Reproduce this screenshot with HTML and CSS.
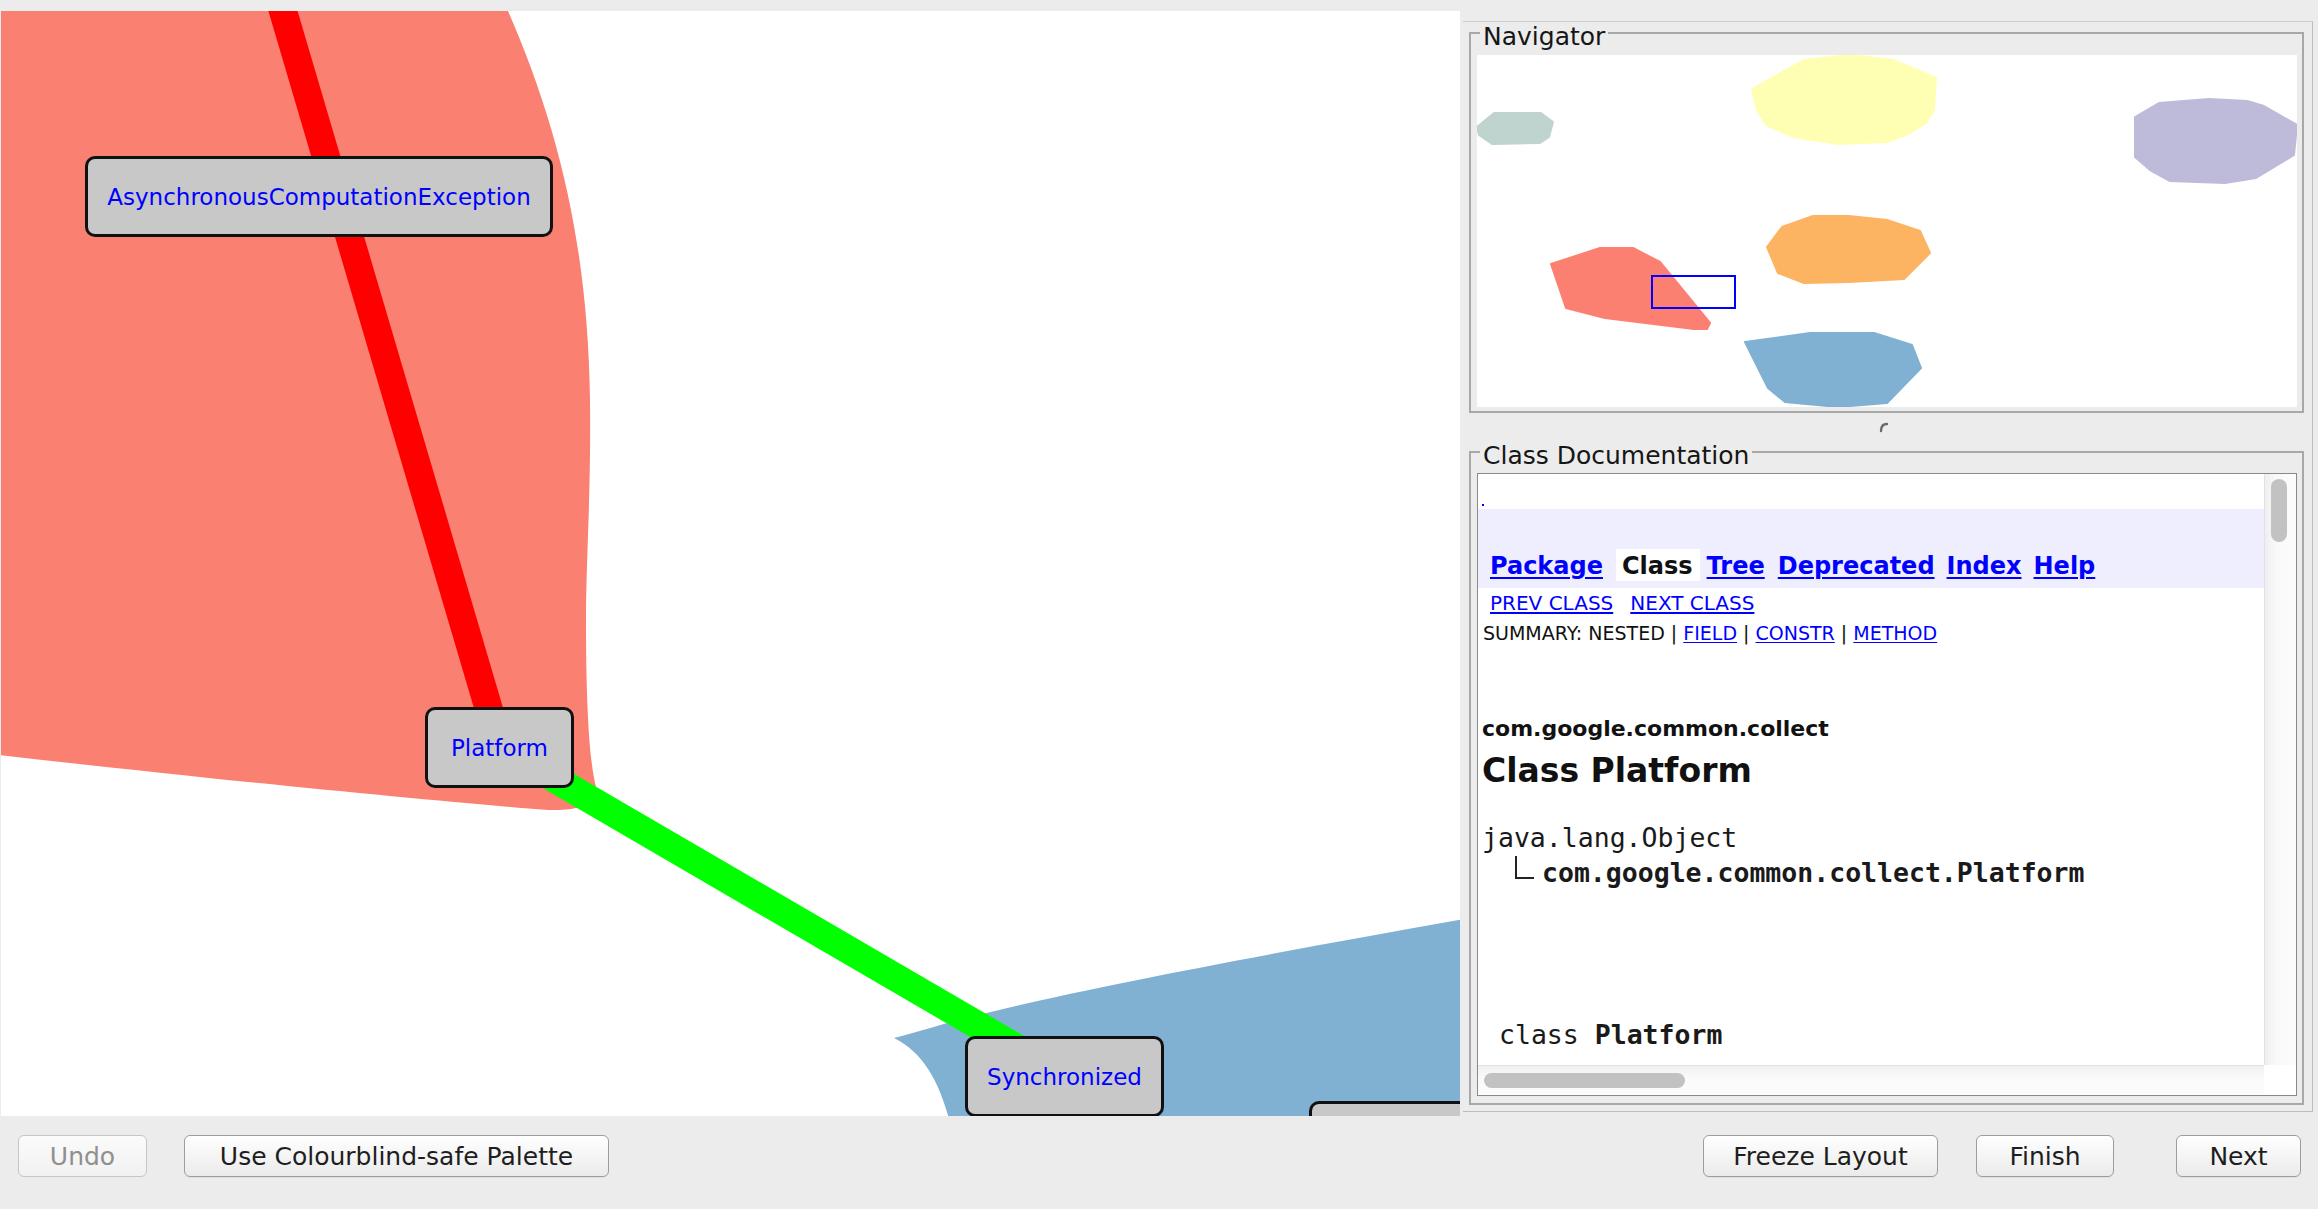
FILE: index.html
```html
<!DOCTYPE html>
<html>
<head>
<meta charset="utf-8">
<title>Graph Explorer</title>
<link rel="stylesheet" href="styles.css">
</head>
<body>
<div class="app">
  <div class="main">
    <div class="canvas">
      <svg class="graph" viewBox="1 11 1459 1105" width="1459" height="1105">
        <path class="hull hull-red" d="M -10 11 L 508 11 C 560 130 588 250 590 400 C 591 500 586 560 586 620 C 586 700 589 760 596 787 C 600 803 580 811 548 810 C 420 800 200 778 -10 754 Z"/>
        <path class="hull hull-blue" d="M 894 1038 C 925 1030 955 1020 991 1012 C 1100 985 1290 950 1470 918 L 1470 1130 L 952 1130 C 942 1090 928 1055 894 1038 Z"/>
        <line class="edge edge-red" x1="265" y1="-50" x2="500" y2="747"/>
        <line class="edge edge-green" x1="500" y1="747" x2="1065" y2="1076"/>
      </svg>
      <div class="node n-async">AsynchronousComputationException</div>
      <div class="node n-platform">Platform</div>
      <div class="node n-sync">Synchronized</div>
      <div class="node n-other"></div>
    </div>
    <div class="side">
      <fieldset class="group nav-group">
        <legend>Navigator</legend>
        <svg class="minimap" viewBox="1477 55 820 352" width="820" height="352">
          <polygon class="mm mm-grey" points="1477,127 1494,113 1541,113 1553,122 1549,137 1540,143 1492,144 1479,135"/>
          <polygon class="mm mm-yellow" points="1752,89 1804,60 1849,55 1893,60 1936,78 1934,110 1926,123 1910,133 1887,142 1838,144 1793,137 1766,125 1757,110"/>
          <polygon class="mm mm-purple" points="2135,117 2159,103 2209,99 2247,101 2264,106 2297,125 2294,155 2256,178 2225,183 2170,181 2150,170 2135,157"/>
          <polygon class="mm mm-orange" points="1782,227 1813,216 1849,216 1887,220 1920,231 1930,253 1904,279 1849,282 1804,283 1778,273 1767,247"/>
          <polygon class="mm mm-red" points="1551,264 1600,248 1633,248 1660,262 1710,323 1707,329 1694,329 1605,318 1566,308"/>
          <polygon class="mm mm-blue" points="1745,342 1810,333 1874,333 1912,345 1921,368 1887,403 1838,407 1785,402 1768,388"/>
          <rect class="mm-view" x="1652" y="276" width="83" height="32"/>
        </svg>
      </fieldset>
      <div class="divider">
        <svg class="grip" viewBox="0 0 12 12" width="12" height="12"><path d="M3 10 C3 6 5 3 9 3"/></svg>
      </div>
      <fieldset class="group doc-group">
        <legend>Class Documentation</legend>
        <div class="pane">
          <div class="viewport">
            <div class="doc-top"><span class="doc-dot"></span></div>
            <div class="navband">
              <a class="nav-link nl-package" href="#">Package</a>
              <span class="nav-current">Class</span>
              <a class="nav-link nl-tree" href="#">Tree</a>
              <a class="nav-link nl-dep" href="#">Deprecated</a>
              <a class="nav-link nl-index" href="#">Index</a>
              <a class="nav-link" href="#">Help</a>
            </div>
            <div class="subnav"><a href="#">PREV CLASS</a><a class="sub-next" href="#">NEXT CLASS</a></div>
            <div class="summary">SUMMARY: NESTED | <a href="#">FIELD</a> | <a href="#">CONSTR</a> | <a href="#">METHOD</a></div>
            <div class="pkg">com.google.common.collect</div>
            <div class="title">Class Platform</div>
            <div class="inherit">java.lang.Object</div>
            <div class="inherit inherit-sub"><span class="tree-elbow"></span><b>com.google.common.collect.Platform</b></div>
            <div class="inherit sig">class <b>Platform</b></div>
          </div>
          <div class="vbar"><div class="vthumb"></div></div>
          <div class="hbar"><div class="hthumb"></div></div>
          <div class="corner"></div>
        </div>
      </fieldset>
    </div>
  </div>
  <div class="buttons">
    <button class="btn b-undo" disabled>Undo</button>
    <button class="btn b-palette">Use Colourblind-safe Palette</button>
    <button class="btn b-freeze">Freeze Layout</button>
    <button class="btn b-finish">Finish</button>
    <button class="btn b-next">Next</button>
  </div>
</div>
</body>
</html>
```

FILE: styles.css
```css
* { box-sizing: border-box; }
html, body { margin: 0; padding: 0; }
body {
  width: 2318px;
  height: 1209px;
  overflow: hidden;
  background: #ececec;
  font-family: "DejaVu Sans", "Liberation Sans", sans-serif;
  color: #111;
}
.app { display: flex; flex-direction: column; height: 1209px; }
.main { display: flex; height: 1116px; flex: none; }

/* ---------- graph canvas ---------- */
.canvas {
  position: relative;
  flex: none;
  width: 1459px;
  height: 1105px;
  margin: 11px 0 0 1px;
  background: #fff;
  overflow: hidden;
}
.graph { position: absolute; left: 0; top: 0; display: block; }
.hull-red { fill: #fa8072; }
.hull-blue { fill: #80b1d3; }
.edge { stroke-width: 28; stroke-linecap: butt; }
.edge-red { stroke: #ff0000; }
.edge-green { stroke: #00ff00; }

.node {
  position: absolute;
  height: 81px;
  border: 3px solid #111;
  border-radius: 10px;
  background: #c8c8c8;
  color: #0000ff;
  font-size: 23px;
  display: flex;
  align-items: center;
  justify-content: center;
  white-space: nowrap;
}
.n-async { left: 84px; top: 145px; width: 468px; }
.n-platform { left: 424px; top: 696px; width: 149px; }
.n-sync { left: 964px; top: 1025px; width: 199px; }
.n-other { left: 1308px; top: 1090px; width: 220px; }

/* ---------- side panel ---------- */
.side {
  flex: none;
  width: 850px;
  height: 1091px;
  margin: 21px 5px 0 3px;
  border-top: 1px solid #cdcdcd;
  border-right: 1px solid #bdbdbd;
  border-bottom: 1px solid #bdbdbd;
  padding: 0 8px 6px 6px;
  display: flex;
  flex-direction: column;
}
.group {
  margin: 0;
  min-width: 0;
  border: 2px solid #a8a8a8;
  padding: 11px 5px 4px 6px;
}
.group legend {
  margin-left: 3px;
  padding: 7px 3px 0;
  line-height: 15px;
  font-size: 25px;
  color: #161616;
}
.nav-group { flex: none; }
.minimap { display: block; background: #fff; }
.mm { stroke-width: 2; stroke-linejoin: round; }
.mm-grey { fill: #bfd4cf; stroke: #bfd4cf; }
.mm-yellow { fill: #ffffb3; stroke: #ffffb3; }
.mm-purple { fill: #bebada; stroke: #bebada; }
.mm-orange { fill: #fdb462; stroke: #fdb462; }
.mm-red { fill: #fb8072; stroke: #fb8072; }
.mm-blue { fill: #80b1d3; stroke: #80b1d3; }
.mm-view { fill: none; stroke: #0000ff; stroke-width: 2; }

.divider {
  flex: none;
  height: 28px;
  display: flex;
  align-items: center;
  justify-content: center;
  padding-right: 6px;
}
.grip { display: block; }
.grip path { fill: none; stroke: #6a6a6a; stroke-width: 2.4; stroke-linecap: round; }

.doc-group {
  flex: 1;
  min-height: 0;
  display: flex;
  flex-direction: column;
  padding: 10px 5px 7px 6px;
}
.pane {
  flex: 1;
  min-height: 0;
  display: grid;
  grid-template-columns: 1fr 32px;
  grid-template-rows: 1fr 30px;
  border: 1px solid #8a8a8a;
  background: #fff;
}
.viewport { overflow: hidden; background: #fff; min-height: 0; }
.doc-top { height: 35px; padding: 30px 0 0 4px; }
.doc-dot { display: block; width: 2px; height: 2px; background: #0000ff; }

.navband {
  height: 79px;
  background: #eeeeff;
  display: flex;
  align-items: flex-end;
  padding: 0 0 7px 12px;
}
.navband a, .nav-current {
  font-weight: bold;
  font-size: 24px;
  line-height: 30px;
  padding-top: 2px;
  white-space: nowrap;
}
.navband a { color: #0000ff; text-decoration: underline; text-decoration-thickness: 2px; text-underline-offset: 3px; }
.nl-package { margin-right: 13px; }
.nav-current { background: #fff; color: #111; padding: 2px 7px 0 6px; margin-right: 7px; }
.nl-tree { margin-right: 13px; }
.nl-dep { margin-right: 12px; }
.nl-index { margin-right: 12px; }

.subnav { padding: 2px 0 0 12px; font-size: 20px; line-height: 26px; white-space: nowrap; }
.subnav a, .summary a { color: #0000ff; text-decoration: underline; text-underline-offset: 2px; }
.sub-next { margin-left: 17px; }
.summary { padding: 4px 0 0 5px; font-size: 19px; line-height: 26px; white-space: nowrap; color: #111; }
.pkg { margin-top: 68px; padding-left: 4px; font-weight: bold; font-size: 22px; line-height: 30px; color: #111; }
.title { margin-top: 7px; padding-left: 4px; font-weight: bold; font-size: 33px; line-height: 40px; color: #111; }
.inherit {
  margin-top: 32px;
  padding-left: 4px;
  font-family: "DejaVu Sans Mono", "Liberation Mono", monospace;
  font-size: 26.5px;
  line-height: 30px;
  white-space: nowrap;
  color: #1a1a1a;
}
.inherit-sub { margin-top: 3px; padding-left: 37px; }
.tree-elbow {
  display: inline-block;
  width: 19px;
  height: 23px;
  border-left: 2px solid #222;
  border-bottom: 2px solid #222;
  margin: 0 8px 3px 0;
}
.sig { margin-top: 132px; padding-left: 21px; }

.vbar {
  border-left: 1px solid #e2e2e2;
  background: linear-gradient(to right, #efefef, #f9f9f9 35%, #fcfcfc);
  padding: 5px 0 0 6px;
}
.vthumb { width: 16px; height: 63px; border-radius: 8px; background: #c2c2c2; }
.hbar {
  border-top: 1px solid #e2e2e2;
  background: linear-gradient(#f0f0f0, #fafafa 40%, #fcfcfc);
  padding: 7px 0 0 6px;
}
.hthumb { width: 201px; height: 15px; border-radius: 8px; background: #c2c2c2; }
.corner { background: #fff; }

/* ---------- buttons ---------- */
.buttons {
  flex: none;
  height: 93px;
  display: flex;
  align-items: flex-start;
  padding: 19px 17px 0 18px;
}
.btn {
  height: 42px;
  padding: 0;
  border: 1px solid #9d9d9d;
  border-radius: 6px;
  background: linear-gradient(#ffffff, #f4f4f4 55%, #ebebeb);
  box-shadow: 0 1px 0 rgba(0,0,0,0.05);
  font-family: "DejaVu Sans", "Liberation Sans", sans-serif;
  font-size: 25px;
  color: #1e1e1e;
  white-space: nowrap;
}
.btn:disabled { color: #8f8f8f; border-color: #c6c6c6; background: linear-gradient(#fbfbfb, #f1f1f1); box-shadow: none; }
.b-undo { width: 129px; }
.b-palette { width: 425px; margin-left: 37px; }
.b-freeze { width: 235px; margin-left: auto; }
.b-finish { width: 138px; margin-left: 38px; }
.b-next { width: 125px; margin-left: 62px; }
```
